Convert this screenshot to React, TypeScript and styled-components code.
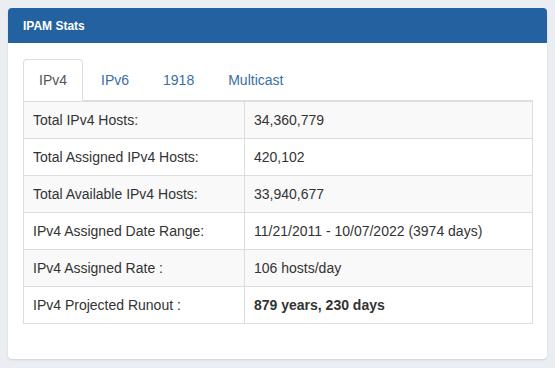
import React, { useState } from "react";
import styled, { createGlobalStyle } from "styled-components";

const Global = createGlobalStyle`
  html, body { margin: 0; padding: 0; background: #eaedf1; }
  body { font-family: "Liberation Sans", Arial, sans-serif; font-size: 14px; color: #333; }
  * { box-sizing: border-box; }
`;

const Page = styled.div`
  padding: 8px 8px 10px 8px;
`;

const Card = styled.div`
  background: #fff;
  border-radius: 4px;
  box-shadow: 0 1px 2px rgba(0, 0, 0, 0.12);
  overflow: hidden;
`;

const CardHeader = styled.div`
  background: #2461a0;
  color: #fff;
  height: 35px;
  padding: 0 15px;
  display: flex;
  align-items: center;
  font-size: 12px;
  font-weight: bold;
`;

const CardBody = styled.div`
  padding: 16px 14px 35px 15px;
`;

const Tabs = styled.ul`
  list-style: none;
  margin: 0;
  padding: 0;
  display: flex;
  border-bottom: 1px solid #ddd;
`;

const Tab = styled.li<{ $active?: boolean }>`
  margin-right: 2px;
  margin-bottom: ${(p) => (p.$active ? "-1px" : "0")};
  padding: 10px 15px;
  line-height: 20px;
  font-size: 14px;
  border: 1px solid ${(p) => (p.$active ? "#ddd" : "transparent")};
  border-bottom: ${(p) => (p.$active ? "1px solid #fff" : "none")};
  border-radius: 4px 4px 0 0;
  background: ${(p) => (p.$active ? "#fff" : "transparent")};
  color: ${(p) => (p.$active ? "#555" : "#3a6ea5")};
  cursor: pointer;
`;

const Table = styled.table`
  width: 100%;
  border-collapse: collapse;
  border: 1px solid #ddd;
  border-top: none;
`;

const Row = styled.tr<{ $striped?: boolean }>`
  background: ${(p) => (p.$striped ? "#f9f9f9" : "#fff")};
`;

const Cell = styled.td<{ $label?: boolean; $bold?: boolean }>`
  border: 1px solid #ddd;
  padding: 8px 9px;
  line-height: 20px;
  font-size: 14px;
  color: #333;
  width: ${(p) => (p.$label ? "221px" : "auto")};
  font-weight: ${(p) => (p.$bold ? "bold" : "normal")};
`;

const rows: { label: string; value: string; bold?: boolean }[] = [
  { label: "Total IPv4 Hosts:", value: "34,360,779" },
  { label: "Total Assigned IPv4 Hosts:", value: "420,102" },
  { label: "Total Available IPv4 Hosts:", value: "33,940,677" },
  { label: "IPv4 Assigned Date Range:", value: "11/21/2011 - 10/07/2022 (3974 days)" },
  { label: "IPv4 Assigned Rate :", value: "106 hosts/day" },
  { label: "IPv4 Projected Runout :", value: "879 years, 230 days", bold: true },
];

const tabs = ["IPv4", "IPv6", "1918", "Multicast"];

export default function App() {
  const [active, setActive] = useState("IPv4");
  return (
    <>
      <Global />
      <Page>
        <Card>
          <CardHeader>IPAM Stats</CardHeader>
          <CardBody>
            <Tabs>
              {tabs.map((t) => (
                <Tab key={t} $active={t === active} onClick={() => setActive(t)}>
                  {t}
                </Tab>
              ))}
            </Tabs>
            <Table>
              <tbody>
                {rows.map((r, i) => (
                  <Row key={r.label} $striped={i % 2 === 0}>
                    <Cell $label>{r.label}</Cell>
                    <Cell $bold={r.bold}>{r.value}</Cell>
                  </Row>
                ))}
              </tbody>
            </Table>
          </CardBody>
        </Card>
      </Page>
    </>
  );
}
